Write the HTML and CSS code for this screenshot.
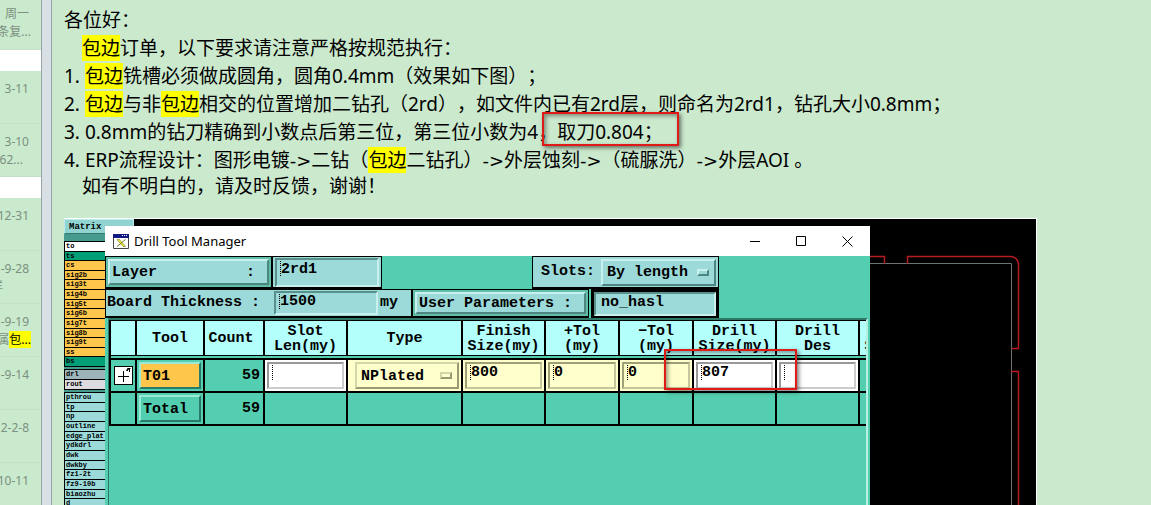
FILE: index.html
```html
<!DOCTYPE html>
<html lang="zh-CN">
<head>
    <meta charset="UTF-8">
    <meta name="viewport" content="width=device-width, initial-scale=1.0">
    <title>Mail</title>
    <link rel="stylesheet" href="styles.css">
</head>
<body>
    <aside class="mail-list">
        <div class="mail first"><time>周一</time><p>条复...</p></div>
        <div class="group-gap"></div>
        <div class="mail"><time>3-11</time></div>
        <div class="mail"><time>3-10</time><p class="short">62...</p></div>
        <div class="group-gap"></div>
        <div class="mail"><time>12-31</time></div>
        <div class="mail"><time>-9-28</time><p class="far">详</p></div>
        <div class="mail"><time>-9-19</time><p>属<mark>包...</mark></p></div>
        <div class="mail"><time>-9-14</time></div>
        <div class="mail"><time>2-2-8</time></div>
        <div class="mail"><time>10-11</time></div>
    </aside>
    <div class="splitter"></div>

    <main class="message">
        <div class="text">
            <p>各位好：</p>
            <p class="indent"><mark>包边</mark>订单，以下要求请注意严格按规范执行：</p>
            <p>1. <mark>包边</mark>铣槽必须做成圆角，圆角0.4mm（效果如下图）；</p>
            <p>2. <mark>包边</mark>与非<mark>包边</mark>相交的位置增加二钻孔（2rd），如文件内已有2rd层，则命名为2rd1，钻孔大小0.8mm；</p>
            <p>3. 0.8mm的钻刀精确到小数点后第三位，第三位小数为4，取刀0.804；</p>
            <p>4. ERP流程设计：图形电镀<span class="arrow">-&gt;</span>二钻（<mark>包边</mark>二钻孔）<span class="arrow">-&gt;</span>外层蚀刻<span class="arrow">-&gt;</span>（硫脲洗）<span class="arrow">-&gt;</span>外层AOI 。</p>
            <p class="indent last">如有不明白的，请及时反馈，谢谢！</p>
            <span class="frame frame-text"></span>
        </div>

        <div class="capture">
            <svg class="board" width="972" height="286" viewBox="0 0 972 286" fill="none">
                <path d="M800 44.500H947.500V286" stroke="#6d7370"/>
                <path d="M800 37.500h20.500v7M843.500 44.500v-7H947q7 1 7.500 8V129.500h-7M947 152.500h7.500V286" stroke="#b51c22" stroke-width="1.500"/>
            </svg>

            <div class="matrix">
                <div class="matrix-title">Matrix</div>
                <div class="layers layers-signal">
                    <div class="white">to</div>
                    <div class="green">ts</div>
                    <div>cs</div>
                    <div>sig2b</div>
                    <div>sig3t</div>
                    <div>sig4b</div>
                    <div>sig5t</div>
                    <div>sig6b</div>
                    <div>sig7t</div>
                    <div>sig8b</div>
                    <div>sig9t</div>
                    <div>ss</div>
                    <div class="green">bs</div>
                </div>
                <div class="layers layers-drill">
                    <div class="grey">drl</div>
                    <div class="light">rout</div>
                </div>
                <div class="layers layers-misc">
                    <div>pthrou</div>
                    <div>tp</div>
                    <div>np</div>
                    <div>outline</div>
                    <div>edge_plat</div>
                    <div>ydkdrl</div>
                    <div>dwk</div>
                    <div>dwkby</div>
                    <div>fz1-2t</div>
                    <div>fz9-10b</div>
                    <div>biaozhu</div>
                    <div>d</div>
                </div>
            </div>

            <section class="window">
                <header class="titlebar">
                    <svg width="16" height="16" viewBox="0 0 16 16">
                        <path d="M.5 1.500h15v14H.5z" fill="#fff" stroke="#444"/>
                        <path d="M0 1h16v4H0z" fill="#101a80"/>
                        <path d="M9 2h1v1H9zM11 2h1v1h-1zM13 2h1v1h-1z" fill="#fff"/>
                        <path d="M4 6.500h2.500l6 7H10z" fill="#f3ea3c" stroke="#77751c" stroke-width=".6"/>
                        <path d="M12.500 6.500L4 13.500" stroke="#77751c"/>
                    </svg>
                    <h1>Drill Tool Manager</h1>
                    <button aria-label="Minimize"><svg width="11" height="11"><path d="M0 5.500h10"/></svg></button>
                    <button aria-label="Maximize"><svg width="11" height="11"><path d="M.5.5h9v9h-9z"/></svg></button>
                    <button aria-label="Close"><svg width="11" height="11"><path d="M.5.5l10 10M10.500.5l-10 10"/></svg></button>
                </header>

                <div class="row">
                    <div class="cell layer"><button class="raised">Layer<span>:</span></button></div>
                    <div class="cell"><input class="entry" aria-label="Layer" value="2rd1"></div>
                    <div class="cell slots">
                        <label for="slots">Slots:</label>
                        <div class="option">
                            <select id="slots"><option>By length</option></select>
                        </div>
                    </div>
                </div>
                <div class="row second">
                    <div class="cell thickness">
                        <label for="thickness">Board Thickness :</label>
                        <input class="entry" id="thickness" value="1500">
                        <span>my</span>
                    </div>
                    <div class="cell params"><button class="raised">User Parameters :</button></div>
                    <div class="cell hasl"><input class="entry" aria-label="User parameters" value="no_hasl"></div>
                </div>

                <div class="tools">
                    <table>
                        <colgroup>
                            <col class="c-expand"><col class="c-tool"><col class="c-count"><col class="c-wide"><col class="c-type"><col class="c-wide"><col class="c-tol"><col class="c-tol"><col class="c-wide"><col class="c-wide"><col class="c-wide">
                        </colgroup>
                        <thead>
                            <tr>
                                <th></th>
                                <th>Tool</th>
                                <th class="count">Count</th>
                                <th>Slot<br>Len(my)</th>
                                <th>Type</th>
                                <th>Finish<br>Size(my)</th>
                                <th>+Tol<br>(my)</th>
                                <th>−Tol<br>(my)</th>
                                <th>Drill<br>Size(my)</th>
                                <th>Drill<br>Des</th>
                                <th>&nbsp;<br>Size(my)</th>
                            </tr>
                        </thead>
                        <tbody>
                            <tr>
                                <td><button class="expand" aria-label="Expand"><svg width="17" height="17" fill="none" stroke="#000"><path d="M3 9.500h11M8.500 4v11"/><path d="M12.500 4v-2.500h3M14.500 1v4M11 3.500l4-2"/></svg></button></td>
                                <td><button class="raised tool">T01</button></td>
                                <td class="num">59</td>
                                <td class="blank"><input class="entry" aria-label="Slot length"></td>
                                <td class="cream"><div class="option"><select aria-label="Type"><option>NPlated</option></select></div></td>
                                <td class="cream"><input class="entry" aria-label="Finish size" value="800"></td>
                                <td class="cream"><input class="entry" aria-label="+Tol" value="0"></td>
                                <td class="cream"><input class="entry" aria-label="-Tol" value="0"></td>
                                <td class="blank"><input class="entry" aria-label="Drill size" value="807"></td>
                                <td class="blank"><input class="entry" aria-label="Drill designator"></td>
                                <td></td>
                            </tr>
                            <tr>
                                <td></td>
                                <td><button class="raised total">Total</button></td>
                                <td class="num">59</td>
                                <td></td><td></td><td></td><td></td><td></td><td></td><td></td><td></td>
                            </tr>
                        </tbody>
                    </table>
                </div>
            </section>
            <span class="frame frame-size"></span>
        </div>
    </main>
</body>
</html>
```

FILE: styles.css
```css
*, *::after {
    box-sizing: border-box;
}
body {
    margin: 0;
    height: 100vh;
    display: flex;
    overflow: hidden;
    background: #cbe9cd;
    color: #000;
    font-family: "Noto Sans", "Noto Sans CJK SC", sans-serif;
}
p, h1 {
    margin: 0;
}
button, input, select {
    font: inherit;
    color: inherit;
    margin: 0;
    border-radius: 0;
    outline: none;
}
mark {
    background: #ff0;
    color: #000;
}

/* mail list */
.mail-list {
    flex: none;
    width: 41px;
    overflow: hidden;
    color: #7d8f80;
    font-size: 12px;
    line-height: 18px;
    white-space: nowrap;
    background: #c9eacd;
}
.mail {
    height: 53px;
    padding: 9px 12px 0 0;
    display: flex;
    flex-direction: column;
    align-items: flex-end;
    border-bottom: 1px solid #c4e0c8;
}
.mail.first {
    height: 50px;
    padding-top: 5px;
}
.mail p {
    margin-right: -2px;
}
.mail .short {
    margin-right: 6px;
}
.mail .far {
    margin-right: 26px;
}
.group-gap {
    height: 21px;
    background: #fff;
}
.splitter {
    flex: none;
    width: 11px;
    background: #d8e0e6;
    border: 1px solid #97a5ab;
    border-width: 0 1px;
}

/* message */
.message {
    flex: 1;
    min-width: 0;
    padding: 6px 12px 0;
    display: flex;
    flex-direction: column;
}
.text {
    position: relative;
    height: 212px;
    font-size: 19px;
    line-height: 28px;
    white-space: nowrap;
    text-spacing-trim: space-all;
}
.text .indent {
    padding-left: 18px;
}
.text .last {
    line-height: 24px;
}
.arrow {
    font-family: "DejaVu Sans", sans-serif;
    font-size: 18px;
    line-height: 20px;
}
.frame {
    position: absolute;
    border: 2px solid #e01a16;
    box-shadow: 2px 2px 4px rgba(0, 0, 0, 0.5), inset 2px 2px 4px rgba(0, 0, 0, 0.4);
    pointer-events: none;
}
.frame-text {
    left: 478px;
    top: 106px;
    width: 137px;
    height: 34px;
}
.frame-size {
    left: 600px;
    top: 130px;
    width: 133px;
    height: 41px;
}

/* captured desktop */
.capture {
    position: relative;
    flex: 1;
    max-width: 973px;
    overflow: hidden;
    background: #000;
    border: 1px solid #fff;
    border-width: 1px 1px 0 0;
    font: bold 15px/16px "Liberation Mono", monospace;
}
.board {
    position: absolute;
    top: 0;
    left: 0;
}
.matrix {
    width: 70px;
    background: #459c8c;
    font-size: 7px;
    line-height: 8px;
}
.matrix-title {
    height: 15px;
    padding-left: 4px;
    margin-bottom: 7px;
    font-size: 9px;
    line-height: 14px;
    background: #90d3d1;
    border: 1px solid #b9ecea;
    border-bottom-color: #357a70;
}
.layers {
    display: grid;
    grid-auto-rows: 1fr;
    gap: 1px;
    padding: 1px;
    margin-bottom: 2px;
    background: #000;
}
.layers div {
    min-height: 0;
    padding-left: 1px;
    background: #9bdad9;
}
.layers-signal {
    height: 126px;
}
.layers-signal div {
    background: #ffc64c;
}
.layers-drill {
    height: 21px;
}
.layers-misc {
    height: 117px;
}
.layers .white {
    background: #fff;
}
.layers .green {
    background: #009f78;
}
.layers .grey {
    background: #9db4ba;
}
.layers .light {
    background: #dedbe0;
}

/* drill tool manager window */
.window {
    position: absolute;
    left: 41px;
    top: 7px;
    bottom: 0;
    width: 765px;
    background: #54ceb0;
    border-right: 2px solid #54ceb0;
}
.titlebar {
    height: 30px;
    padding-left: 8px;
    display: flex;
    align-items: center;
    background: #fff;
    margin-right: -2px;
}
.titlebar h1 {
    flex: 1;
    margin-left: 5px;
    font: 13px/16px "Noto Sans", sans-serif;
}
.titlebar button {
    width: 46px;
    height: 30px;
    padding: 0;
    display: flex;
    align-items: center;
    justify-content: center;
    border: 0;
    background: none;
}
.titlebar button svg {
    fill: none;
    stroke: #000;
}
.row {
    height: 33px;
    display: flex;
}
.row.second {
    height: 29px;
}
.cell {
    display: flex;
    align-items: center;
    padding: 2px;
    background: #9bdad9;
    border: 1px solid #000;
    border-bottom-width: 2px;
}
.raised {
    width: 100%;
    height: 100%;
    padding: 2px 2px 0;
    display: flex;
    align-items: center;
    background: #9bdad9;
    border: 2px solid;
    border-color: #c8f0ee #4d8580 #4d8580 #c8f0ee;
}
.layer {
    width: 167px;
    background: #5fbfa8;
}
.layer .raised {
    justify-content: space-between;
    padding-right: 12px;
}
.entry {
    width: 108px;
    height: 29px;
    padding: 0 0 6px 4px;
    background: repeating-linear-gradient(#000 0 1px, transparent 1px 2px) 3px 1px / 1px 15px no-repeat;
    border: 2px solid;
    border-color: #5a908c #c8f0ee #c8f0ee #5a908c;
}
.row .entry {
    width: 104px;
}
.slots {
    width: 187px;
    margin-left: 150px;
    padding-left: 8px;
    justify-content: space-between;
}
.option {
    position: relative;
    width: 115px;
    height: 27px;
    border: 2px solid;
    border-color: #c8f0ee #4d8580 #4d8580 #c8f0ee;
}
.option select {
    width: 100%;
    height: 100%;
    padding: 2px 4px 0;
    appearance: none;
    background: none;
    border: 0;
}
.option::after {
    content: "";
    position: absolute;
    right: 5px;
    top: 8px;
    width: 12px;
    height: 7px;
    border: 2px solid;
    border-color: #c8f0ee #4d8580 #4d8580 #c8f0ee;
}
.thickness {
    width: 307px;
    padding: 0 1px;
    justify-content: space-between;
}
.thickness label {
    width: 165px;
}
.thickness .entry {
    height: 24px;
    padding-bottom: 3px;
}
.thickness span {
    width: 30px;
}
.params {
    width: 177px;
    background: #5fbfa8;
}
.hasl {
    width: 128px;
    margin-left: 2px;
    padding: 0;
    border-width: 3px 3px 2px;
}
.hasl .entry {
    width: 100%;
    height: 24px;
    padding: 0 0 4px 5px;
    background: none;
}

/* tool table */
.tools {
    margin-left: 3px;
    width: 760px;
    height: calc(100% - 92px);
    overflow: hidden;
    border: 2px solid #2f7767;
    border-width: 2px 2px 0 1px;
    border-right-color: #b5f0e2;
}
table {
    width: 834px;
    table-layout: fixed;
    border-collapse: separate;
    border-spacing: 0;
    border-left: 2px solid #000;
}
.c-expand {
    width: 26px;
}
.c-tool {
    width: 68px;
}
.c-count {
    width: 60px;
}
.c-wide {
    width: 83px;
}
.c-type {
    width: 115px;
}
.c-tol {
    width: 74px;
}
th {
    height: 36px;
    padding: 1px 0 0;
    line-height: 15px;
    background: #b3fffc;
    border: 1px solid #000;
    border-width: 1px 2px 1px 0;
}
.count {
    padding-right: 6px;
}
tbody::before {
    content: "";
    display: table-row;
    height: 2px;
}
td {
    height: 33px;
    padding: 2px;
    border: 2px solid #000;
    border-width: 0 2px 2px 0;
}
tbody tr:first-child td {
    height: 35px;
    border-top-width: 2px;
}
td .raised {
    width: 62px;
    height: 27px;
    background: none;
    border-color: #97ead7 #277b68 #277b68 #97ead7;
}
td .tool {
    background: #ffc64c;
}
.num {
    text-align: right;
    padding-right: 3px;
}
td .entry {
    display: block;
    width: 100%;
    height: 27px;
    border-color: #999 #ccc #ccc #999;
}
.blank {
    background: #fff;
}
.cream {
    background: #ffc;
}
.cream .entry {
    border-color: #a0a078 #c6c69c #c6c69c #a0a078;
}
.cream .option {
    width: 104px;
    margin: 0 0 0 auto;
    border-color: #d5d5aa #999972 #999972 #d5d5aa;
}
.cream .option::after {
    border-color: #d5d5aa #999972 #999972 #d5d5aa;
}
.expand {
    display: block;
    width: 19px;
    height: 19px;
    margin: 0 auto;
    padding: 0;
    background: #fff;
    border: 1px solid #000;
}
.expand svg {
    display: block;
}
```
